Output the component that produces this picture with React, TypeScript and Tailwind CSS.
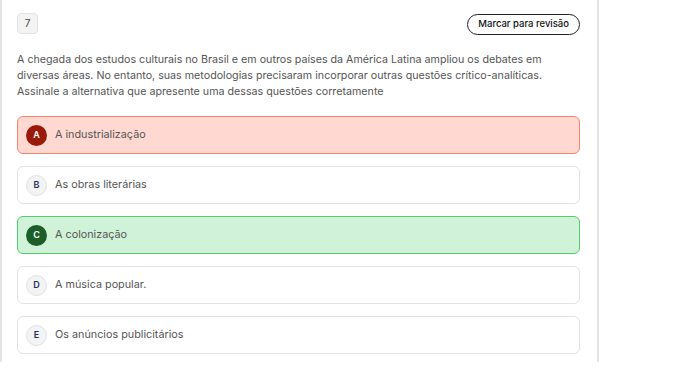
import React from "react";

type Option = {
  letter: string;
  text: string;
  state?: "wrong" | "right";
};

const options: Option[] = [
  { letter: "A", text: "A industrialização", state: "wrong" },
  { letter: "B", text: "As obras literárias" },
  { letter: "C", text: "A colonização", state: "right" },
  { letter: "D", text: "A música popular." },
  { letter: "E", text: "Os anúncios publicitários" },
];

const OptionRow = ({ letter, text, state }: Option) => {
  const box =
    state === "wrong"
      ? "bg-[#ffd9d1] border-[#f5846f]"
      : state === "right"
        ? "bg-[#d0f2d9] border-[#52cb6b]"
        : "bg-white border-[#e2e2e2]";
  const badge =
    state === "wrong"
      ? "bg-[#9a1a0a] text-white border-transparent"
      : state === "right"
        ? "bg-[#1c5e2a] text-white border-transparent"
        : "bg-[#f3f3f3] text-[#1d2f5c] border-[#e2e2e2]";
  return (
    <div className={`flex items-center h-[38px] px-[8px] gap-[8px] border rounded-[6px] ${box}`}>
      <span
        className={`flex items-center justify-center w-[21px] h-[21px] rounded-full border text-[9px] font-semibold ${badge}`}
      >
        {letter}
      </span>
      <span className="text-[10.8px] text-[#555]">{text}</span>
    </div>
  );
};

export default function App() {
  return (
    <div
      className="w-[695px] h-[385px] bg-white"
      style={{ fontFamily: "Inter, 'Noto Sans', sans-serif" }}
    >
      <div className="w-[599px] h-[362px] border-x-2 border-[#e4e4e4] pl-[15px] pr-[17px] pt-[13px]">
        <div className="flex items-start justify-between">
          <span className="flex items-center justify-center w-[21px] h-[21px] rounded-[4px] bg-[#f3f3f3] border border-[#e2e2e2] text-[10px] text-[#444]">
            7
          </span>
          <button className="mt-px h-[21px] px-[10px] rounded-full border border-[#222] text-[9.5px] font-medium text-[#111]">
            Marcar para revisão
          </button>
        </div>
        <p className="mt-[17px] text-[10.7px] leading-[16px] text-[#555]">
          A chegada dos estudos culturais no Brasil e em outros países da América Latina ampliou os debates em
          diversas áreas. No entanto, suas metodologias precisaram incorporar outras questões crítico-analíticas.
          Assinale a alternativa que apresente uma dessas questões corretamente
        </p>
        <div className="mt-[16px] flex flex-col gap-[12px]">
          {options.map((o) => (
            <OptionRow key={o.letter} {...o} />
          ))}
        </div>
      </div>
    </div>
  );
}
